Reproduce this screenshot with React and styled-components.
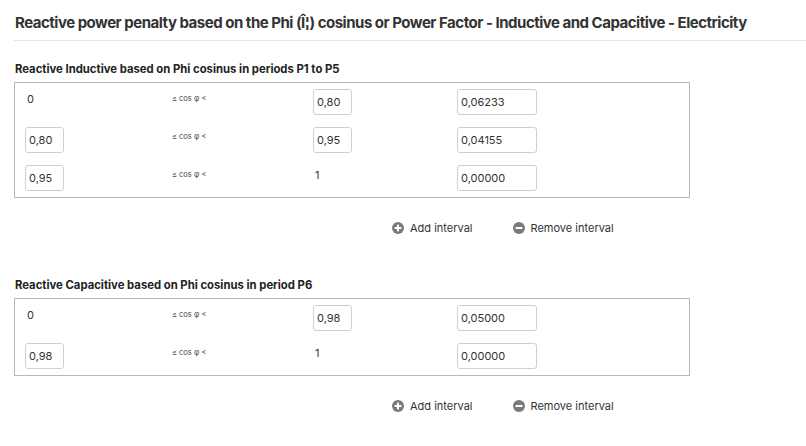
import React from "react";
import styled, { createGlobalStyle } from "styled-components";

const GlobalStyle = createGlobalStyle`
  body {
    margin: 0;
    background: #fff;
    font-family: Inter, "Liberation Sans", Arial, sans-serif;
    color: #333;
    -webkit-font-smoothing: antialiased;
  }
`;

const inductive = [
  { from: "0", fromInput: false, to: "0,80", toInput: true, price: "0,06233" },
  { from: "0,80", fromInput: true, to: "0,95", toInput: true, price: "0,04155" },
  { from: "0,95", fromInput: true, to: "1", toInput: false, price: "0,00000" },
];

const capacitive = [
  { from: "0", fromInput: false, to: "0,98", toInput: true, price: "0,05000" },
  { from: "0,98", fromInput: true, to: "1", toInput: false, price: "0,00000" },
];

function PlusIcon() {
  return (
    <svg width="12" height="12" viewBox="0 0 12 12">
      <circle cx="6" cy="6" r="6" fill="#7a7a7a" />
      <rect x="2.6" y="5" width="6.8" height="2" fill="#fff" />
      <rect x="5" y="2.6" width="2" height="6.8" fill="#fff" />
    </svg>
  );
}

function MinusIcon() {
  return (
    <svg width="12" height="12" viewBox="0 0 12 12">
      <circle cx="6" cy="6" r="6" fill="#7a7a7a" />
      <rect x="2.6" y="5" width="6.8" height="2" fill="#fff" />
    </svg>
  );
}

function Cell({ value, isInput, wide }) {
  if (isInput) return <Input defaultValue={value} $wide={wide} />;
  return <Plain>{value}</Plain>;
}

function Section({ title, rows }) {
  return (
    <>
      <SectionTitle>{title}</SectionTitle>
      <Box>
        {rows.map((r, i) => (
          <Row key={i}>
            <Cell value={r.from} isInput={r.fromInput} />
            <Relation>≤ cos φ &lt;</Relation>
            <Cell value={r.to} isInput={r.toInput} />
            <Cell value={r.price} isInput wide />
          </Row>
        ))}
      </Box>
      <Actions>
        <Action>
          <PlusIcon />
          Add interval
        </Action>
        <Action>
          <MinusIcon />
          Remove interval
        </Action>
      </Actions>
    </>
  );
}

function App() {
  return (
    <Page>
      <GlobalStyle />
      <Header>
        <Title>
          Reactive power penalty based on the Phi (Î¦) cosinus or Power Factor -
          Inductive and Capacitive - Electricity
        </Title>
      </Header>
      <Section
        title="Reactive Inductive based on Phi cosinus in periods P1 to P5"
        rows={inductive}
      />
      <Spacer />
      <Section
        title="Reactive Capacitive based on Phi cosinus in period P6"
        rows={capacitive}
      />
    </Page>
  );
}

export default App;

const Page = styled.div`
  width: 806px;
  height: 446px;
  overflow: hidden;
  padding-left: 14px;
  box-sizing: border-box;
`;

const Header = styled.div`
  padding: 13px 0 7px 1px;
  border-bottom: 1px solid #e4e4e4;
`;

const Title = styled.h1`
  margin: 0;
  font-size: 15px;
  line-height: 20px;
  font-weight: 700;
  letter-spacing: -0.49px;
  color: #333;
  white-space: nowrap;
`;

const SectionTitle = styled.h2`
  margin: 21px 0 6px 1px;
  font-size: 11.3px;
  line-height: 14px;
  font-weight: 700;
  color: #222;
`;

const Box = styled.div`
  width: 676px;
  box-sizing: border-box;
  border: 1px solid #b8b8b8;
  padding: 6px 10px;
  display: flex;
  flex-direction: column;
  gap: 12px;
`;

const Row = styled.div`
  display: grid;
  grid-template-columns: 147px 141px 144px auto;
  align-items: start;
  height: 26px;
`;

const Input = styled.input`
  box-sizing: border-box;
  width: ${(p) => (p.$wide ? "80px" : "39px")};
  height: 26px;
  border: 1px solid #cfcfcf;
  border-radius: 3px;
  padding: 0 3px;
  font-family: inherit;
  font-size: 11px;
  color: #333;
  background: #fff;
  outline: none;
`;

const Plain = styled.div`
  padding: 3px 0 0 2px;
  font-size: 11px;
  line-height: 14px;
  color: #333;
`;

const Relation = styled.div`
  padding-top: 3px;
  font-size: 7.5px;
  line-height: 14px;
  color: #444;
`;

const Actions = styled.div`
  display: flex;
  align-items: center;
  gap: 40px;
  margin: 23px 0 0 378px;
  height: 14px;
`;

const Action = styled.div`
  display: flex;
  align-items: center;
  gap: 6px;
  font-size: 11px;
  color: #333;
  cursor: pointer;
`;

const Spacer = styled.div`
  height: 22px;
`;
